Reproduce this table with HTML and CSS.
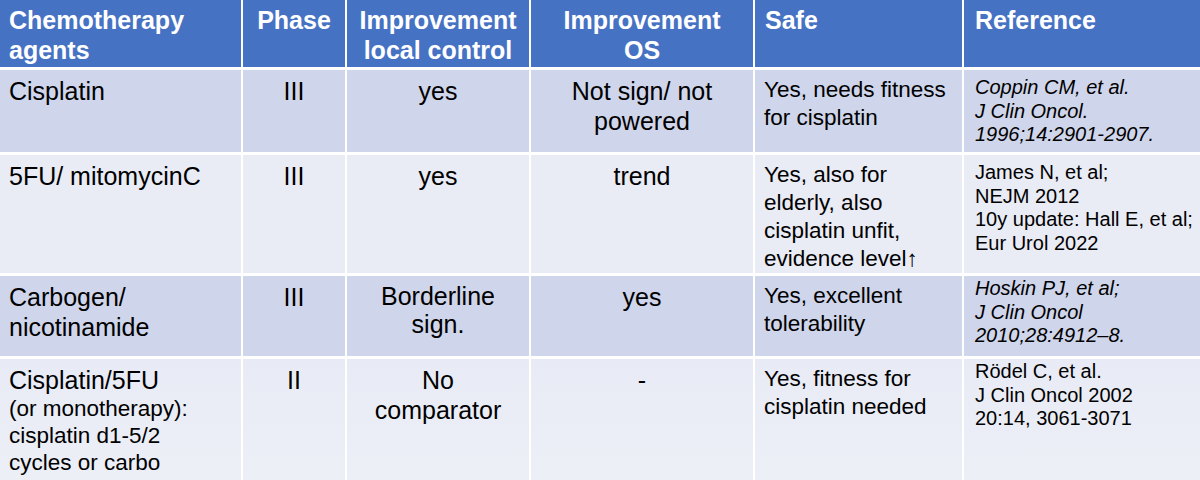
FILE: index.html
```html
<!DOCTYPE html>
<html lang="en">
<head>
<meta charset="utf-8">
<title>Chemotherapy agents</title>
<link rel="stylesheet" href="styles.css">
</head>
<body>
<div class="table">
  <div class="cell h">Chemotherapy<br>agents</div>
  <div class="cell h c">Phase</div>
  <div class="cell h c">Improvement<br>local control</div>
  <div class="cell h c">Improvement<br>OS</div>
  <div class="cell h pl10">Safe</div>
  <div class="cell h pl11">Reference</div>

  <div class="cell odd">Cisplatin</div>
  <div class="cell odd c">III</div>
  <div class="cell odd c">yes</div>
  <div class="cell odd c">Not sign/ not<br>powered</div>
  <div class="cell odd safe">Yes, needs fitness<br>for cisplatin</div>
  <div class="cell odd ref it">Coppin CM, et al.<br>J Clin Oncol.<br>1996;14:2901-2907.</div>

  <div class="cell even">5FU/ mitomycinC</div>
  <div class="cell even c">III</div>
  <div class="cell even c">yes</div>
  <div class="cell even c">trend</div>
  <div class="cell even safe">Yes, also for<br>elderly, also<br>cisplatin unfit,<br>evidence level↑</div>
  <div class="cell even ref">James N, et al;<br>NEJM 2012<br>10y update: Hall E, et al;<br>Eur Urol 2022</div>

  <div class="cell odd">Carbogen/<br>nicotinamide</div>
  <div class="cell odd c">III</div>
  <div class="cell odd c lh28">Borderline<br>sign.</div>
  <div class="cell odd c">yes</div>
  <div class="cell odd safe">Yes, excellent<br>tolerability</div>
  <div class="cell odd ref it tight">Hoskin PJ, et al;<br>J Clin Oncol<br>2010;28:4912–8.</div>

  <div class="cell last">
    <div>Cisplatin/5FU</div>
    <div class="sub">(or monotherapy):<br>cisplatin d1-5/2<br>cycles or carbo</div>
  </div>
  <div class="cell last c">II</div>
  <div class="cell last c">No<br>comparator</div>
  <div class="cell last c">-</div>
  <div class="cell last safe">Yes, fitness for<br>cisplatin needed</div>
  <div class="cell last ref tight">Rödel C, et al.<br>J Clin Oncol 2002<br>20:14, 3061-3071</div>
</div>
</body>
</html>
```

FILE: styles.css
```css
html, body {
  margin: 0;
  padding: 0;
  background: #ffffff;
}

body {
  font-family: "Liberation Sans", Arial, sans-serif;
  color: #000000;
}

.table {
  display: grid;
  grid-template-columns: 241px 102px 182px 222px 207px 236px;
  grid-template-rows: 67px 82px 118px 80px 121px;
  gap: 3px 2px;
  width: 1200px;
  height: 480px;
  background: #ffffff;
  overflow: hidden;
}

.cell {
  padding: 6px 9px 0 9px;
  font-size: 25px;
  line-height: 30px;
  white-space: nowrap;
  overflow: hidden;
}

.h {
  background: #4672c4;
  color: #ffffff;
  font-weight: bold;
  padding-top: 5px;
}

.odd {
  background: #cfd5ea;
}

.even {
  background: #e9ebf5;
}

.last {
  background: linear-gradient(180deg, #e8ebf5 0%, #edeff7 100%);
}

.c {
  text-align: center;
}

.pl10 {
  padding-left: 10px;
}

.pl11 {
  padding-left: 11px;
}

.lh28 {
  line-height: 28px;
}

.safe {
  font-size: 22.5px;
  line-height: 28px;
}

.ref {
  font-size: 20px;
  line-height: 23.6px;
  padding-left: 11px;
}

.it {
  font-style: italic;
}

.tight {
  padding-top: 1px;
}

.sub {
  font-size: 22.5px;
  line-height: 27px;
}
```
